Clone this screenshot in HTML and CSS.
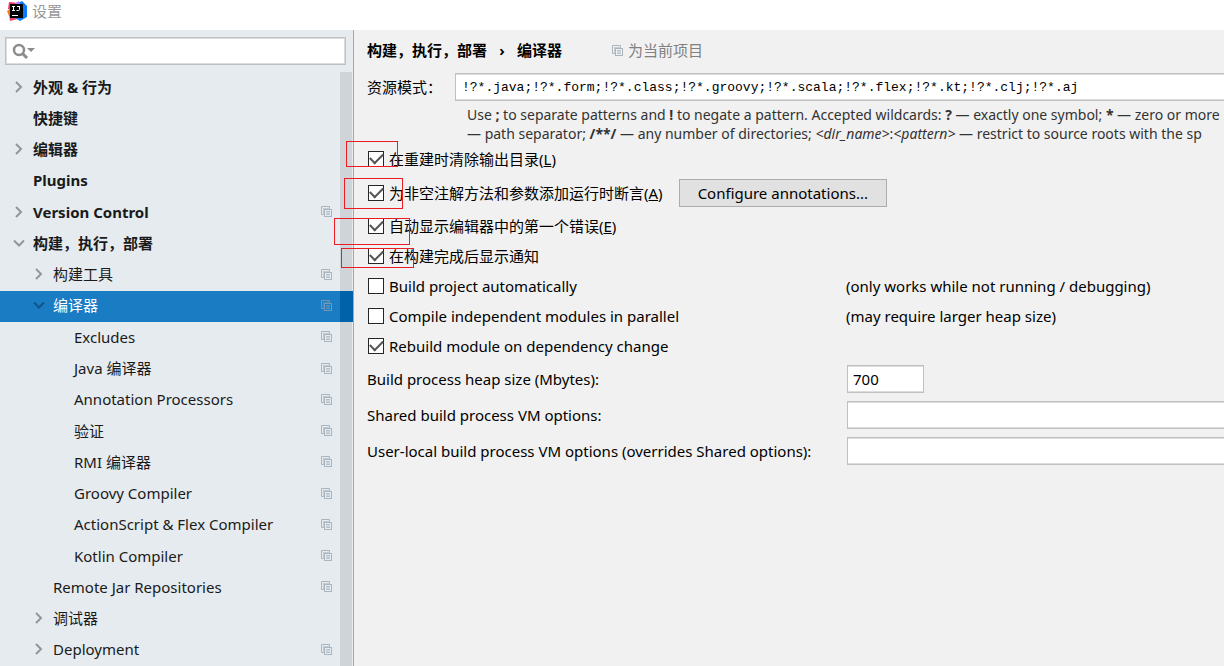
FILE: index.html
```html
<!DOCTYPE html>
<html lang="zh-CN">
<head>
  <meta charset="UTF-8" />
  <meta name="viewport" content="width=device-width, initial-scale=1.0"/>
  <title>设置</title>
  <link rel="stylesheet" href="styles.css">
</head>
<body>

  <!-- shared icons -->
  <svg class="sprite" aria-hidden="true">
    <symbol id="copy" viewBox="0 0 11 11">
      <path d="M2.5 8.5h-2v-8h8v2" fill="none" stroke="currentColor"/>
      <path d="M2 2h7v1H3v6H2z" fill="currentColor" opacity=".6"/>
      <rect x="3.5" y="3.5" width="7" height="7" fill="none" stroke="currentColor"/>
      <path d="M5 5.5h4M5 7h4M5 8.5h4" stroke="currentColor" stroke-width=".8"/>
    </symbol>
    <symbol id="right" viewBox="0 0 12 12">
      <path d="M3 1l5 5-5 5" fill="none" stroke="currentColor" stroke-width="2"/>
    </symbol>
    <symbol id="down" viewBox="0 0 12 12">
      <path d="M1 3.5l5 5 5-5" fill="none" stroke="currentColor" stroke-width="2"/>
    </symbol>
  </svg>

  <header class="titlebar">
    <svg class="logo" viewBox="0 0 20 20">
      <path d="M2 1l9 1-2 9-8-3z" fill="#fe315d"/>
      <path d="M0 10l5-3 2 7-5 1z" fill="#f97a12"/>
      <path d="M2 13l8-2 1 7-8 2z" fill="#e9446a"/>
      <path d="M11 2l4-2 5 5v11l-7 4-6-4z" fill="#087cfa"/>
      <path d="M7 3l5-3 2 5-6 3z" fill="#b07cf0"/>
      <rect x="3" y="3" width="13" height="14" fill="#000"/>
      <path d="M5 5.5h3M6.500 5v5M5 9.500h3M10 5.500h3M12.500 5v3.500q0 1-1 1H9.500" fill="none" stroke="#fff"/>
      <path d="M5 14.500h6" stroke="#fff"/>
    </svg>
    <h1>设置</h1>
  </header>

  <div class="window">
    <nav class="sidebar">
      <div class="search">
        <svg viewBox="0 0 24 16">
          <circle cx="7" cy="7" r="5" fill="none" stroke="#8c8c8c" stroke-width="2.500"/>
          <path d="M10.500 10.500l4.500 4.500" stroke="#8c8c8c" stroke-width="3"/>
          <path d="M15 5h8l-4 4z" fill="#8c8c8c"/>
        </svg>
        <input type="text" aria-label="搜索">
      </div>

      <ul class="tree">
        <li><a class="row top" href="#"><svg class="arrow"><use href="#right"/></svg><span>外观 &amp; 行为</span></a></li>
        <li><a class="row top" href="#"><i class="arrow"></i><span>快捷键</span></a></li>
        <li><a class="row top" href="#"><svg class="arrow"><use href="#right"/></svg><span>编辑器</span></a></li>
        <li><a class="row top" href="#"><i class="arrow"></i><span>Plugins</span></a></li>
        <li><a class="row top" href="#"><svg class="arrow"><use href="#right"/></svg><span>Version Control</span><svg class="copy"><use href="#copy"/></svg></a></li>
        <li><a class="row top" href="#"><svg class="arrow"><use href="#down"/></svg><span>构建，执行，部署</span></a></li>
        <li><a class="row sub" href="#"><svg class="arrow"><use href="#right"/></svg><span>构建工具</span><svg class="copy"><use href="#copy"/></svg></a></li>
        <li><a class="row sub selected" href="#"><svg class="arrow"><use href="#down"/></svg><span>编译器</span><svg class="copy"><use href="#copy"/></svg></a></li>
        <li><a class="row leaf" href="#"><span>Excludes</span><svg class="copy"><use href="#copy"/></svg></a></li>
        <li><a class="row leaf" href="#"><span>Java 编译器</span><svg class="copy"><use href="#copy"/></svg></a></li>
        <li><a class="row leaf" href="#"><span>Annotation Processors</span><svg class="copy"><use href="#copy"/></svg></a></li>
        <li><a class="row leaf" href="#"><span>验证</span><svg class="copy"><use href="#copy"/></svg></a></li>
        <li><a class="row leaf" href="#"><span>RMI 编译器</span><svg class="copy"><use href="#copy"/></svg></a></li>
        <li><a class="row leaf" href="#"><span>Groovy Compiler</span><svg class="copy"><use href="#copy"/></svg></a></li>
        <li><a class="row leaf" href="#"><span>ActionScript &amp; Flex Compiler</span><svg class="copy"><use href="#copy"/></svg></a></li>
        <li><a class="row leaf" href="#"><span>Kotlin Compiler</span><svg class="copy"><use href="#copy"/></svg></a></li>
        <li><a class="row sub" href="#"><i class="arrow"></i><span>Remote Jar Repositories</span><svg class="copy"><use href="#copy"/></svg></a></li>
        <li><a class="row sub" href="#"><svg class="arrow"><use href="#right"/></svg><span>调试器</span></a></li>
        <li><a class="row sub" href="#"><svg class="arrow"><use href="#right"/></svg><span>Deployment</span><svg class="copy"><use href="#copy"/></svg></a></li>
      </ul>
    </nav>

    <main class="content">
      <div class="crumbs">
        <h2>构建，执行，部署</h2>
        <span class="sep">›</span>
        <h2>编译器</h2>
        <span class="scope"><svg class="copy"><use href="#copy"/></svg>为当前项目</span>
      </div>

      <div class="patterns">
        <label for="patterns">资源模式：</label>
        <input type="text" id="patterns" class="field" value="!?*.java;!?*.form;!?*.class;!?*.groovy;!?*.scala;!?*.flex;!?*.kt;!?*.clj;!?*.aj">
      </div>
      <div class="hint">
        <p>Use <b>;</b> to separate patterns and <b>!</b> to negate a pattern. Accepted wildcards: <b>?</b> — exactly one symbol; <b>*</b> — zero or more</p>
        <p>— path separator; <b>/**/</b> — any number of directories; <em>&lt;dir_name&gt;</em>:<em>&lt;pattern&gt;</em> — restrict to source roots with the sp</p>
      </div>

      <div class="option"><label><input type="checkbox" checked>在重建时清除输出目录(<u>L</u>)</label></div>
      <div class="option tall">
        <label><input type="checkbox" checked>为非空注解方法和参数添加运行时断言(<u>A</u>)</label>
        <button type="button">Configure annotations...</button>
      </div>
      <div class="option"><label><input type="checkbox" checked>自动显示编辑器中的第一个错误(<u>E</u>)</label></div>
      <div class="option"><label><input type="checkbox" checked>在构建完成后显示通知</label></div>
      <div class="option noted"><label><input type="checkbox">Build project automatically</label><span>(only works while not running / debugging)</span></div>
      <div class="option noted"><label><input type="checkbox">Compile independent modules in parallel</label><span>(may require larger heap size)</span></div>
      <div class="option"><label><input type="checkbox" checked>Rebuild module on dependency change</label></div>

      <div class="form">
        <label for="heap">Build process heap size (Mbytes):</label>
        <input type="text" id="heap" class="field short" value="700">
        <label for="shared">Shared build process VM options:</label>
        <input type="text" id="shared" class="field">
        <label for="local">User-local build process VM options (overrides Shared options):</label>
        <input type="text" id="local" class="field">
      </div>
    </main>
  </div>

  <!-- red marks round the ticked options -->
  <div class="mark mark-1"></div>
  <div class="mark mark-2"></div>
  <div class="mark mark-3"></div>
  <div class="mark mark-4"></div>

</body>
</html>
```
FILE: styles.css
```css
* {
  margin: 0;
  padding: 0;
  box-sizing: border-box;
}

:root {
  --panel: #f1f1f1;
  --side: #e5ebef;
  --thumb: #cfd4d8;
  --select: #1a7cc3;
  --line: #c0c0c0;
  --icon: #a9b5bf;
}

body {
  position: relative;
  display: flex;
  flex-direction: column;
  min-height: 100vh;
  overflow-x: hidden;
  background: #fff;
  color: #000;
  font: 15px/20px "Noto Sans", "Noto Sans CJK SC", sans-serif;
}

input, button {
  font: inherit;
  color: inherit;
}

.sprite {
  position: absolute;
  width: 0;
  height: 0;
}

.titlebar {
  display: flex;
  align-items: flex-start;
  gap: 5px;
  height: 30px;
  padding: 1px 7px;
}

.titlebar h1 {
  font-size: 15px;
  font-weight: 400;
  color: #999;
}

.logo {
  width: 20px;
  height: 20px;
}

.window {
  flex: 1;
  display: flex;
}

/* left side */
.sidebar {
  flex: none;
  display: flex;
  flex-direction: column;
  width: 354px;
  background: var(--side);
  border-right: 1px solid #a5a8ab;
}

.search {
  display: flex;
  align-items: center;
  height: 28px;
  margin: 7px 7px 7px 5px;
  padding-left: 6px;
  background: #fff;
  border: 1px solid var(--line);
  box-shadow: inset 0 0 0 1px #dcdcdc;
}

.search svg {
  width: 24px;
  height: 16px;
}

.search input {
  flex: 1;
  min-width: 0;
  background: none;
  border: none;
  outline: none;
}

.tree {
  flex: 1;
  display: flex;
  flex-direction: column;
  list-style: none;
  background: linear-gradient(to left, var(--side) 1px, var(--thumb) 1px, var(--thumb) 13px, transparent 13px);
}

.tree li {
  flex: 1;
  display: flex;
}

.row {
  flex: 1;
  display: flex;
  align-items: center;
  gap: 8px;
  padding-right: 21px;
  padding-bottom: 2px;
  color: #1a1a1a;
  text-decoration: none;
}

.row.top {
  padding-left: 13px;
  font-weight: 700;
}

.row.sub {
  padding-left: 33px;
}

.row.leaf {
  padding-left: 74px;
}

.row.selected {
  background: linear-gradient(to left, #0062a9 13px, var(--select) 13px);
  color: #fff;
}

.arrow {
  width: 12px;
  height: 12px;
  color: #939699;
}

.selected .arrow {
  color: #10548a;
}

.copy {
  width: 11px;
  height: 11px;
  margin-left: auto;
  color: var(--icon);
}

.selected .copy {
  color: #7099b8;
}

/* right side */
.content {
  flex: 1;
  min-width: 0;
  padding: 6px 0 0 13px;
  background: var(--panel);
  white-space: nowrap;
  overflow: hidden;
}

.crumbs {
  display: flex;
  align-items: center;
  height: 28px;
}

.crumbs h2 {
  font-size: 15px;
  font-weight: 700;
}

.sep {
  width: 30px;
  text-align: center;
  font-weight: 700;
}

.scope {
  display: flex;
  align-items: center;
  gap: 5px;
  margin-left: 50px;
  color: #808080;
}

.patterns {
  display: flex;
  align-items: center;
  margin-top: 9px;
}

.patterns label {
  width: 88px;
}

.patterns .field {
  flex: 1;
  font-family: "Liberation Mono", monospace;
  font-size: 13px;
}

.field {
  width: 100%;
  min-width: 0;
  height: 28px;
  padding: 0 6px;
  background: #fff;
  border: 1px solid var(--line);
  border-right: none;
  box-shadow: inset 0 1px #dcdcdc, inset 0 -1px #dcdcdc;
  outline: none;
}

.field.short {
  width: 77px;
  padding: 0 5px;
  border-right: 1px solid var(--line);
}

.hint {
  height: 43px;
  padding: 4px 0 0 100px;
  font-size: 14px;
  line-height: 19px;
  color: #333;
}

.option {
  display: flex;
  align-items: center;
  gap: 16px;
  height: 30px;
}

.option.tall {
  height: 37px;
}

.option label {
  display: flex;
  align-items: center;
}

.option.noted {
  display: grid;
  grid-template-columns: 463px auto;
}

.option input {
  appearance: none;
  display: grid;
  place-items: center;
  width: 16px;
  height: 16px;
  margin: 0 5px 0 1px;
  background: #fff;
  border: 1px solid #262626;
}

.option input:checked::before {
  content: "";
  width: 11px;
  height: 6px;
  border: solid #555;
  border-width: 0 0 2px 2px;
  transform: translateY(-2px) rotate(-45deg);
}

.option button {
  height: 28px;
  padding: 0 18px;
  background: #e1e1e1;
  border: 1px solid #adadad;
}

.form {
  display: grid;
  grid-template-columns: 480px 1fr;
  grid-auto-rows: 36px;
  align-items: center;
}

.mark {
  position: absolute;
  border: 1px solid #ed1c24;
  pointer-events: none;
}

.mark-1 {
  left: 346px;
  top: 141px;
  width: 52px;
  height: 26px;
}

.mark-2 {
  left: 344px;
  top: 178px;
  width: 59px;
  height: 31px;
}

.mark-3 {
  left: 334px;
  top: 218px;
  width: 76px;
  height: 27px;
}

.mark-4 {
  left: 341px;
  top: 248px;
  width: 73px;
  height: 20px;
}
```
